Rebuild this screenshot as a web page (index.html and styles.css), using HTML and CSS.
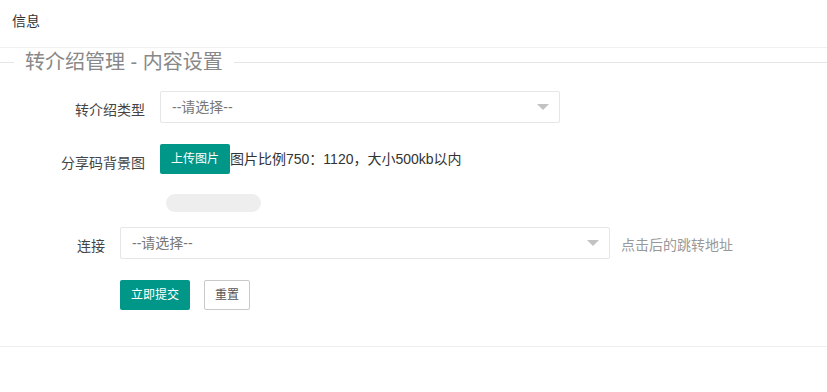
FILE: index.html
```html
<!DOCTYPE html>
<html lang="zh-CN">

<head>
    <meta charset="UTF-8">
    <title>内容设置</title>
    <link rel="stylesheet" href="styles.css">
</head>

<body>
    <div class="header">信息</div>
    <fieldset class="box">
        <legend>转介绍管理 - 内容设置</legend>
        <form class="form">
            <div class="item">
                <label class="label label-wide">转介绍类型</label>
                <div class="select select-mid">
                    <span>--请选择--</span>
                    <i class="edge"></i>
                </div>
            </div>
            <div class="item item-upload">
                <label class="label label-wide">分享码背景图</label>
                <div class="block">
                    <div class="upload-line">
                        <button type="button" class="btn">上传图片</button>
                        <span class="tip">图片比例750：1120，大小500kb以内</span>
                    </div>
                    <div class="preview"></div>
                </div>
            </div>
            <div class="item">
                <label class="label">连接</label>
                <div class="select select-long">
                    <span>--请选择--</span>
                    <i class="edge"></i>
                </div>
                <span class="aux">点击后的跳转地址</span>
            </div>
            <div class="item item-btns">
                <button type="button" class="btn">立即提交</button>
                <button type="reset" class="btn btn-primary">重置</button>
            </div>
        </form>
    </fieldset>
</body>
</html>
```

FILE: styles.css
```css
* {
    margin: 0;
    padding: 0;
    box-sizing: border-box;
}

body {
    font-family: "Liberation Sans", "Noto Sans CJK SC", sans-serif;
    font-size: 14px;
    color: #333;
    background: #fff;
}

.header {
    height: 48px;
    padding: 11px 12px 0;
    line-height: 20px;
    border-bottom: 1px solid #f0f0f0;
}

.box {
    border: 0;
    border-top: 1px solid #e6e6e6;
    border-bottom: 1px solid #eee;
}

.box legend {
    margin-left: 14px;
    padding: 0 11px;
    font-size: 20px;
    line-height: 28px;
    color: #888;
}

.form {
    padding: 15px 0 36px;
}

.item {
    display: flex;
    align-items: flex-start;
    margin-bottom: 21px;
}

.item-upload {
    margin-bottom: 15px;
}

.item-btns {
    padding-left: 120px;
    margin-bottom: 0;
}

.label {
    width: 120px;
    padding: 9px 15px 0 0;
    line-height: 20px;
    text-align: right;
    color: #444;
}

.label-wide {
    width: 160px;
}

.select {
    position: relative;
    height: 32px;
    padding-left: 11px;
    line-height: 30px;
    border: 1px solid #e6e6e6;
    border-radius: 2px;
    color: #777;
}

.select-mid {
    width: 400px;
}

.select-long {
    width: 490px;
}

.edge {
    position: absolute;
    right: 10px;
    top: 12px;
    width: 0;
    height: 0;
    border-style: solid;
    border-width: 6px 6px 0;
    border-color: #c2c2c2 transparent transparent;
}

.aux {
    padding: 8px 0 0 11px;
    line-height: 20px;
    color: #999;
}

.upload-line {
    display: flex;
    align-items: center;
    height: 30px;
}

.tip {
    line-height: 20px;
    color: #333;
}

.preview {
    width: 95px;
    height: 18px;
    margin: 20px 0 0 6px;
    border-radius: 9px;
    background: #eee;
}

.btn {
    height: 30px;
    padding: 0 10px;
    border: 1px solid transparent;
    border-radius: 2px;
    background: #009688;
    color: #fff;
    font-family: inherit;
    font-size: 12px;
    line-height: 28px;
    cursor: pointer;
}

.btn + .btn {
    margin-left: 14px;
}

.btn-primary {
    background: #fff;
    border-color: #c9c9c9;
    color: #555;
}
```
